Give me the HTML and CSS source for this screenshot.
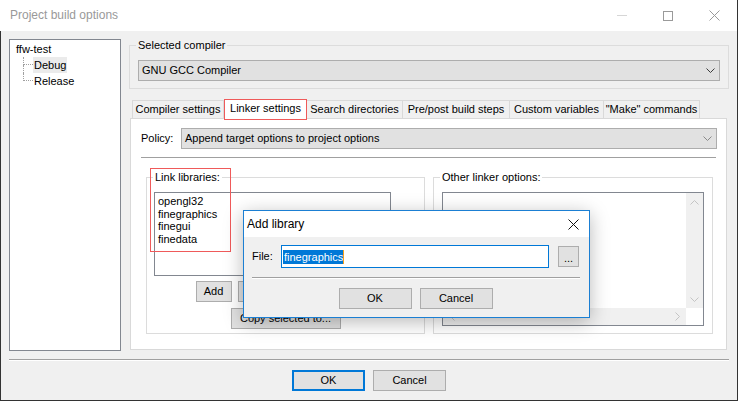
FILE: index.html
```html
<!DOCTYPE html>
<html>
<head>
<meta charset="utf-8">
<title>Project build options</title>
<link rel="stylesheet" href="styles.css">
</head>
<body>
<div class="window">
  <div class="titlebar">
    <span class="title">Project build options</span>
    <div class="caption-btns">
      <span class="cap"><svg width="10" height="1" viewBox="0 0 10 1"><rect width="10" height="1" fill="#d6d6d6"/></svg></span>
      <span class="cap"><svg width="10" height="10" viewBox="0 0 10 10"><rect x="0.5" y="0.5" width="9" height="9" fill="none" stroke="#9a9a9a"/></svg></span>
      <span class="cap"><svg width="11" height="11" viewBox="0 0 11 11"><path d="M0.5 0.5L10.5 10.5M10.5 0.5L0.5 10.5" stroke="#9a9a9a" stroke-width="1"/></svg></span>
    </div>
  </div>
  <div class="client">
    <div class="main">
      <div class="tree">
        <div class="trow root"><span class="tlabel">ffw-test</span></div>
        <div class="trow child">
          <span class="conn"><span class="conn-top"></span><span class="conn-bot"></span></span>
          <span class="tlabel sel">Debug</span>
        </div>
        <div class="trow child">
          <span class="conn"><span class="conn-top"></span><span class="conn-bot last"></span></span>
          <span class="tlabel">Release</span>
        </div>
      </div>
      <div class="right">
        <fieldset class="group compiler-group">
          <legend>Selected compiler</legend>
          <div class="gbody compiler-body">
            <div class="combo dark">
              <span class="combo-text">GNU GCC Compiler</span>
              <span class="chev"><svg width="9" height="5" viewBox="0 0 9 5"><path d="M0.5 0.5L4.5 4.5L8.5 0.5" fill="none" stroke="#3c3c3c"/></svg></span>
            </div>
          </div>
        </fieldset>
        <div class="notebook">
          <div class="tabs">
            <div class="tab t1">Compiler settings</div>
            <div class="tab t2 active">Linker settings</div>
            <div class="tab t3">Search directories</div>
            <div class="tab t4">Pre/post build steps</div>
            <div class="tab t5">Custom variables</div>
            <div class="tab t6">&quot;Make&quot; commands</div>
          </div>
          <div class="page">
            <div class="policy-row">
              <span class="policy-label">Policy:</span>
              <div class="combo">
                <span class="combo-text">Append target options to project options</span>
                <span class="chev"><svg width="9" height="5" viewBox="0 0 9 5"><path d="M0.5 0.5L4.5 4.5L8.5 0.5" fill="none" stroke="#8a8a8a"/></svg></span>
              </div>
            </div>
            <div class="hsep"></div>
            <div class="groups">
              <fieldset class="group link-group">
                <legend>Link libraries:</legend>
                <div class="gbody link-body">
                  <div class="listbox">
                    <div class="item">opengl32</div>
                    <div class="item">finegraphics</div>
                    <div class="item">finegui</div>
                    <div class="item">finedata</div>
                  </div>
                  <div class="btn-row">
                    <span class="btn b-add">Add</span>
                    <span class="btn b-mid">Edit</span>
                    <span class="btn b-mid">Delete</span>
                    <span class="btn b-mid">Clear</span>
                  </div>
                  <div class="btn-row copy-row">
                    <span class="btn b-copy">Copy selected to...</span>
                  </div>
                </div>
              </fieldset>
              <fieldset class="group other-group">
                <legend>Other linker options:</legend>
                <div class="gbody other-body">
                  <div class="textarea">
                    <div class="ta-content"></div>
                    <div class="vscroll">
                      <svg width="9" height="5" viewBox="0 0 9 5"><path d="M0.5 4.5L4.5 0.5L8.5 4.5" fill="none" stroke="#c4c4c4"/></svg>
                      <svg width="9" height="5" viewBox="0 0 9 5"><path d="M0.5 0.5L4.5 4.5L8.5 0.5" fill="none" stroke="#c4c4c4"/></svg>
                    </div>
                    <div class="hscroll">
                      <svg width="5" height="9" viewBox="0 0 5 9"><path d="M4.5 0.5L0.5 4.5L4.5 8.5" fill="none" stroke="#c4c4c4"/></svg>
                      <svg width="5" height="9" viewBox="0 0 5 9"><path d="M0.5 0.5L4.5 4.5L0.5 8.5" fill="none" stroke="#c4c4c4"/></svg>
                    </div>
                    <div class="corner"></div>
                  </div>
                </div>
              </fieldset>
            </div>
          </div>
        </div>
      </div>
    </div>
    <div class="bsep"></div>
    <div class="bottom-btns">
      <span class="btn b-main default">OK</span>
      <span class="btn b-main">Cancel</span>
    </div>
  </div>

  <div class="annot"></div>

  <div class="dialog">
    <div class="dlg-title">
      <span class="dlg-title-text">Add library</span>
      <svg class="dlg-close" width="11" height="11" viewBox="0 0 11 11"><path d="M0.5 0.5L10.5 10.5M10.5 0.5L0.5 10.5" stroke="#111" stroke-width="1"/></svg>
    </div>
    <div class="dlg-body">
      <div class="file-row">
        <span class="file-label">File:</span>
        <div class="file-input"><span class="selected">finegraphics</span><span class="caret"></span></div>
        <span class="btn b-dots">...</span>
      </div>
      <div class="dsep"></div>
      <div class="dlg-btns">
        <span class="btn b-main">OK</span>
        <span class="btn b-main">Cancel</span>
      </div>
    </div>
  </div>
</div>
</body>
</html>
```

FILE: styles.css
```css
* { box-sizing: border-box; }
html, body { margin: 0; padding: 0; }
body {
  width: 738px;
  height: 401px;
  overflow: hidden;
  font-family: "Liberation Sans", Arial, sans-serif;
  font-size: 11px;
  line-height: 13px;
  color: #000;
  background: #f0f0f0;
}
.window {
  position: relative;
  width: 738px;
  height: 401px;
  display: flex;
  flex-direction: column;
  border-right: 1px solid #333;
  border-bottom: 1px solid #333;
}

/* title bar */
.titlebar {
  height: 31px;
  flex: none;
  background: #fff;
  display: flex;
  align-items: center;
  padding-left: 10px;
}
.title {
  font-size: 12px;
  line-height: 15px;
  color: #999;
  flex: 1;
}
.caption-btns { display: flex; height: 31px; }
.cap {
  width: 46px;
  height: 31px;
  display: flex;
  align-items: center;
  justify-content: center;
}

/* client */
.client {
  flex: 1;
  border-left: 1px solid #333;
  padding: 7px 8px 0 8px;
  display: flex;
  flex-direction: column;
}
.main { display: flex; gap: 8px; }

/* tree */
.tree {
  width: 112px;
  height: 312px;
  margin-top: 1px;
  background: #fff;
  border: 1px solid #828790;
  padding: 1px 0 0 6px;
}
.trow { display: flex; height: 16px; align-items: stretch; }
.tlabel { display: flex; align-items: center; padding: 0 1px; }
.root .tlabel { padding: 0; }
.child { margin-left: 7px; }
.conn { width: 10px; display: flex; flex-direction: column; }
.conn-top { height: 8px; border-left: 1px dotted #a0a0a0; border-bottom: 1px dotted #a0a0a0; }
.conn-bot { height: 8px; border-left: 1px dotted #a0a0a0; }
.conn-bot.last { border-left: none; }
.sel { background: #ebebeb; }

/* right side */
.right { width: 600px; display: flex; flex-direction: column; }

fieldset.group {
  margin: 0;
  padding: 0;
  border: 1px solid #dcdcdc;
  min-width: 0;
}
fieldset.group legend {
  margin-left: 6px;
  padding: 0 2px;
  line-height: 14px;
  height: 14px;
}
.compiler-body { padding: 8px 8px 7px 8px; }

.combo {
  height: 21px;
  background: #e1e1e1;
  border: 1px solid #adadad;
  display: flex;
  align-items: center;
  padding-left: 3px;
}
.combo-text { flex: 1; }
.chev {
  width: 17px;
  height: 19px;
  display: flex;
  align-items: center;
  justify-content: center;
}

/* notebook */
.notebook { margin-top: 10px; margin-left: 1px; width: 597px; }
.tabs {
  display: flex;
  height: 19px;
  align-items: flex-end;
  padding-left: 2px;
}
.tab {
  height: 18px;
  border: 1px solid #d9d9d9;
  border-bottom: none;
  border-left: none;
  background: #f0f0f0;
  display: flex;
  align-items: center;
  justify-content: center;
  white-space: nowrap;
}
.tab.t1 { border-left: 1px solid #d9d9d9; width: 92px; }
.tab.t2 { width: 83px; }
.tab.t3 { width: 96px; }
.tab.t4 { width: 107px; }
.tab.t5 { width: 94px; }
.tab.t6 { width: 96px; }
.tab.active {
  height: 21px;
  margin-bottom: -2px;
  background: #fff;
  border: 1px solid #ef5a5a;
  position: relative;
  z-index: 2;
  padding-bottom: 2px;
}
.page {
  height: 232px;
  background: #fff;
  border: 1px solid #d9d9d9;
  padding: 9px 9px 0 10px;
}
.policy-row { display: flex; align-items: center; height: 21px; }
.policy-label { width: 40px; flex: none; }
.policy-row .combo { flex: 1; }
.hsep {
  margin-top: 8px;
  margin-right: 1px;
  height: 2px;
  border-top: 1px solid #a0a0a0;
  border-bottom: 1px solid #fff;
}
.groups {
  display: flex;
  gap: 8px;
  margin-top: 11px;
  padding-left: 5px;
}
.groups fieldset.group { flex: none; height: 164px; }
.groups fieldset.link-group { width: 279px; }
.groups fieldset.other-group { width: 280px; }
.link-group legend { margin-left: 4px; }
.link-body { padding: 8px 0 0 7px; }
.other-body { padding: 8px 0 0 8px; }

.listbox {
  width: 237px;
  height: 84px;
  background: #fff;
  border: 1px solid #828790;
  padding: 2px 0 0 3px;
}
.item { line-height: 12.7px; }

.btn-row {
  display: flex;
  justify-content: center;
  gap: 6px;
  margin-top: 5px;
  margin-left: -7px;
}
.copy-row { margin-top: 6px; }
.btn {
  height: 21px;
  background: #e1e1e1;
  border: 1px solid #adadad;
  display: flex;
  align-items: center;
  justify-content: center;
  white-space: nowrap;
}
.b-add { width: 36px; }
.b-mid { width: 42px; }
.b-copy { width: 110px; }

.textarea {
  width: 262px;
  height: 134px;
  border: 1px solid #828790;
  background: #fff;
  display: grid;
  grid-template-columns: 1fr 17px;
  grid-template-rows: 1fr 17px;
}
.vscroll {
  background: #f0f0f0;
  display: flex;
  flex-direction: column;
  justify-content: space-between;
  align-items: center;
  padding: 7px 0 6px 0;
}
.hscroll {
  background: #f0f0f0;
  display: flex;
  justify-content: space-between;
  align-items: center;
  padding: 0 6px 0 7px;
}
.corner { background: #fff; }

/* bottom */
.bsep {
  margin-top: 8px;
  height: 2px;
  border-top: 1px solid #a0a0a0;
  border-bottom: 1px solid #fff;
}
.bottom-btns {
  display: flex;
  justify-content: center;
  gap: 8px;
  margin-top: 9px;
}
.b-main { width: 73px; }
.default { border: 2px solid #0078d7; }

/* annotation rectangle */
.annot {
  position: absolute;
  left: 150px;
  top: 168px;
  width: 81px;
  height: 84px;
  border: 1px solid #ef5a5a;
}

/* dialog */
.dialog {
  position: absolute;
  left: 243px;
  top: 210px;
  width: 347px;
  height: 108px;
  border: 1px solid #1b7fd3;
  background: #f0f0f0;
  box-shadow: 0 4px 18px rgba(0, 0, 0, 0.28);
  display: flex;
  flex-direction: column;
  z-index: 5;
}
.dlg-title {
  height: 26px;
  background: #fff;
  display: flex;
  align-items: center;
  padding-left: 3px;
  padding-right: 10px;
}
.dlg-title-text { flex: 1; font-size: 12px; line-height: 15px; }
.dlg-body { padding: 8px 10px 8px 8px; }
.file-row { display: flex; align-items: center; height: 23px; }
.file-label { width: 29px; flex: none; }
.file-input {
  width: 268px;
  height: 23px;
  border: 1px solid #0078d7;
  background: #fff;
  display: flex;
  align-items: center;
  padding-left: 1px;
}
.selected {
  background: #0078d7;
  color: #fff;
  line-height: 14px;
  padding: 0 0 0 1px;
}
.caret { width: 1px; height: 14px; background: #f7a21b; }
.b-dots { width: 21px; margin-left: 9px; padding-top: 3px; }
.dsep {
  margin-top: 9px;
  margin-right: -1px;
  height: 2px;
  border-top: 1px solid #a0a0a0;
  border-bottom: 1px solid #fff;
}
.dlg-btns {
  display: flex;
  justify-content: center;
  gap: 8px;
  margin-top: 9px;
}
```
